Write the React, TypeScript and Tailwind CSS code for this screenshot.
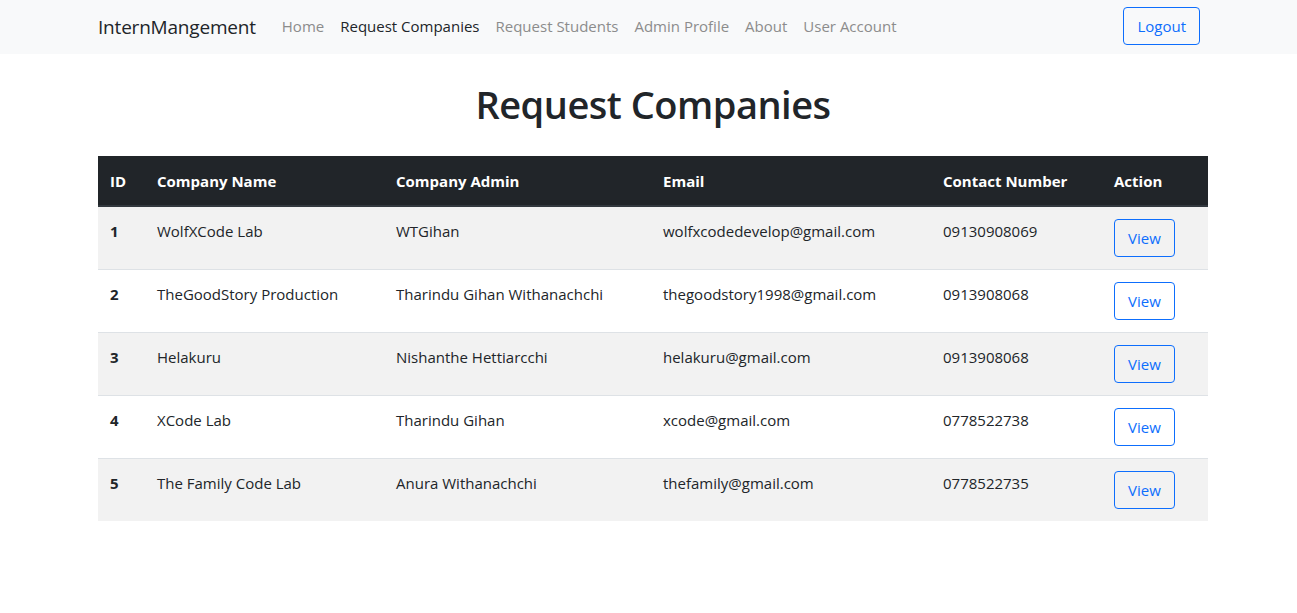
const rows = [
  { id: 1, name: "WolfXCode Lab", admin: "WTGihan", email: "wolfxcodedevelop@gmail.com", phone: "09130908069" },
  { id: 2, name: "TheGoodStory Production", admin: "Tharindu Gihan Withanachchi", email: "thegoodstory1998@gmail.com", phone: "0913908068" },
  { id: 3, name: "Helakuru", admin: "Nishanthe Hettiarcchi", email: "helakuru@gmail.com", phone: "0913908068" },
  { id: 4, name: "XCode Lab", admin: "Tharindu Gihan", email: "xcode@gmail.com", phone: "0778522738" },
  { id: 5, name: "The Family Code Lab", admin: "Anura Withanachchi", email: "thefamily@gmail.com", phone: "0778522735" },
];

const links = ["Home", "Request Companies", "Request Students", "Admin Profile", "About", "User Account"];

export default function App() {
  return (
    <div className="min-h-[613px] bg-white text-[#212529] font-['Open_Sans',sans-serif]">
      <nav className="h-[54px] bg-[#f8f9fa] flex items-center">
        <div className="ml-[98px] w-[1102px] flex items-center">
          <span className="text-[19px] mr-[18px] text-[#212529] tracking-[-0.2px]">InternMangement</span>
          <ul className="flex -mt-[2px]">
            {links.map((l) => (
              <li key={l}>
                <a
                  href="#"
                  className={
                    "block px-[8px] text-[15px] leading-[24px] " +
                    (l === "Request Companies" ? "text-[#212529]" : "text-[#8c8c8c]")
                  }
                >
                  {l}
                </a>
              </li>
            ))}
          </ul>
          <button className="ml-auto -mt-[2px] h-[38px] px-[13px] border border-[#0d6efd] text-[#0d6efd] rounded-[4px] text-[15px]">
            Logout
          </button>
        </div>
      </nav>

      <div className="ml-[98px] w-[1110px]">
        <h1 className="text-center text-[38px] font-semibold leading-[48px] mt-[26px] mb-[28px] tracking-[-0.5px]">
          Request Companies
        </h1>
        <table className="w-full border-collapse text-[15px] leading-[24px] align-top">
          <thead>
            <tr className="bg-[#212529] text-white border-b-2 border-[#32383e]">
              <th className="w-[47px] text-left font-bold px-[12px] pt-[13px] pb-[12px]">ID</th>
              <th className="w-[239px] text-left font-bold px-[12px] pt-[13px] pb-[12px]">Company Name</th>
              <th className="w-[267px] text-left font-bold px-[12px] pt-[13px] pb-[12px]">Company Admin</th>
              <th className="w-[280px] text-left font-bold px-[12px] pt-[13px] pb-[12px]">Email</th>
              <th className="w-[171px] text-left font-bold px-[12px] pt-[13px] pb-[12px]">Contact Number</th>
              <th className="text-left font-bold px-[12px] pt-[13px] pb-[12px]">Action</th>
            </tr>
          </thead>
          <tbody>
            {rows.map((r, i) => (
              <tr
                key={r.id}
                className={(i % 2 === 0 ? "bg-[#f2f2f2]" : "bg-white") + (i < rows.length - 1 ? " border-b border-[#dee2e6]" : "")}
              >
                <td className="px-[12px] pt-[12px] pb-[12px] align-top font-bold">{r.id}</td>
                <td className="px-[12px] pt-[12px] align-top">{r.name}</td>
                <td className="px-[12px] pt-[12px] align-top">{r.admin}</td>
                <td className="px-[12px] pt-[12px] align-top">{r.email}</td>
                <td className="px-[12px] pt-[12px] align-top">{r.phone}</td>
                <td className="px-[12px] pt-[12px] pb-[12px] align-top">
                  <button className="h-[38px] px-[13px] border border-[#0d6efd] text-[#0d6efd] rounded-[4px] text-[15px]">
                    View
                  </button>
                </td>
              </tr>
            ))}
          </tbody>
        </table>
      </div>
    </div>
  );
}
